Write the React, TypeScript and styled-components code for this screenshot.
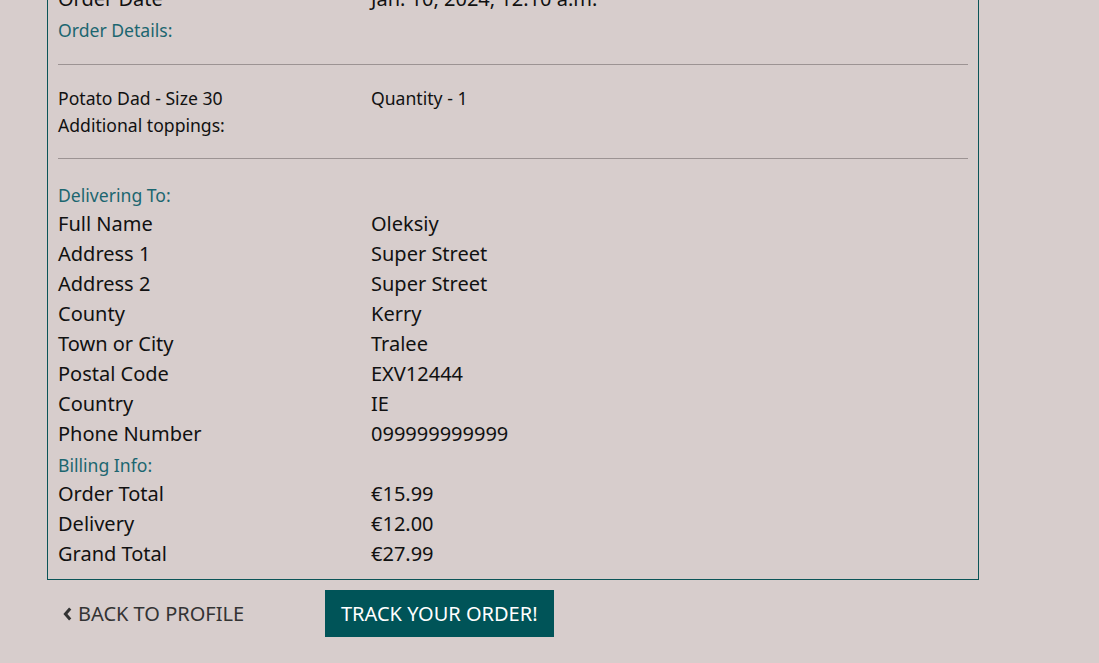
import React from "react";
import styled, { createGlobalStyle } from "styled-components";

const GlobalStyle = createGlobalStyle`
  html, body {
    margin: 0;
    padding: 0;
    background: #d7cdcc;
    font-family: "Noto Sans", "Open Sans", sans-serif;
    color: #111;
    overflow: hidden;
  }
`;

const Page = styled.main`
  width: 1099px;
  height: 663px;
  overflow: hidden;
`;

const Shifted = styled.div`
  margin-top: -16px;
  margin-left: 47px;
  width: 932px;
`;

const Card = styled.section`
  border: 1px solid #0b5457;
  border-top: none;
  padding: 0 10px 10px;
`;

const Row = styled.div<{ $small?: boolean; $gap?: number }>`
  display: grid;
  grid-template-columns: 313px 1fr;
  font-size: ${({ $small }) => ($small ? "17.6px" : "20px")};
  line-height: ${({ $small }) => ($small ? "27px" : "30px")};
  margin-top: ${({ $gap }) => ($gap ?? 0)}px;
`;

const SectionTitle = styled.div<{ $gap?: number }>`
  color: #1c6670;
  font-size: 17.6px;
  line-height: 24px;
  margin-top: ${({ $gap }) => ($gap ?? 0)}px;
`;

const Divider = styled.hr<{ $top: number; $bottom: number }>`
  border: none;
  border-top: 1px solid #9c9393;
  margin: ${({ $top, $bottom }) => `${$top}px 0 ${$bottom}px`};
`;

const Actions = styled.div`
  display: flex;
  align-items: center;
  margin-top: 10px;
`;

const BackLink = styled.a`
  display: flex;
  align-items: center;
  gap: 6px;
  width: 262px;
  padding-left: 16px;
  font-size: 20px;
  color: #333;
  text-transform: uppercase;
  text-decoration: none;
  cursor: pointer;
`;

const TrackButton = styled.button`
  height: 47px;
  padding: 0 16px;
  border: none;
  border-radius: 0;
  background: #005458;
  color: #fff;
  font-family: inherit;
  font-size: 20px;
  text-transform: uppercase;
  cursor: pointer;
`;

const delivery = [
  ["Full Name", "Oleksiy"],
  ["Address 1", "Super Street"],
  ["Address 2", "Super Street"],
  ["County", "Kerry"],
  ["Town or City", "Tralee"],
  ["Postal Code", "EXV12444"],
  ["Country", "IE"],
  ["Phone Number", "099999999999"],
];

const billing = [
  ["Order Total", "€15.99"],
  ["Delivery", "€12.00"],
  ["Grand Total", "€27.99"],
];

export default function App() {
  return (
    <Page>
      <GlobalStyle />
      <Shifted>
        <Card>
          <Row>
            <span>Order Date</span>
            <span>Jan. 10, 2024, 12:10 a.m.</span>
          </Row>
          <SectionTitle $gap={4}>Order Details:</SectionTitle>
          <Divider $top={22} $bottom={0} />
          <Row $small $gap={20}>
            <span>Potato Dad - Size 30</span>
            <span>Quantity - 1</span>
          </Row>
          <Row $small>
            <span>Additional toppings:</span>
            <span></span>
          </Row>
          <Divider $top={19} $bottom={0} />
          <SectionTitle $gap={24}>Delivering To:</SectionTitle>
          {delivery.map(([k, v], i) => (
            <Row key={k} $gap={i === 0 ? 2 : 0}>
              <span>{k}</span>
              <span>{v}</span>
            </Row>
          ))}
          <SectionTitle $gap={4}>Billing Info:</SectionTitle>
          {billing.map(([k, v], i) => (
            <Row key={k} $gap={i === 0 ? 2 : 0}>
              <span>{k}</span>
              <span>{v}</span>
            </Row>
          ))}
        </Card>
        <Actions>
          <BackLink>
            <svg width="9" height="14" viewBox="0 0 9 14">
              <path d="M7.2 1.5 L2.4 7 L7.2 12.5" fill="none" stroke="#333" strokeWidth="3" />
            </svg>
            Back to Profile
          </BackLink>
          <TrackButton>Track your order!</TrackButton>
        </Actions>
      </Shifted>
    </Page>
  );
}
